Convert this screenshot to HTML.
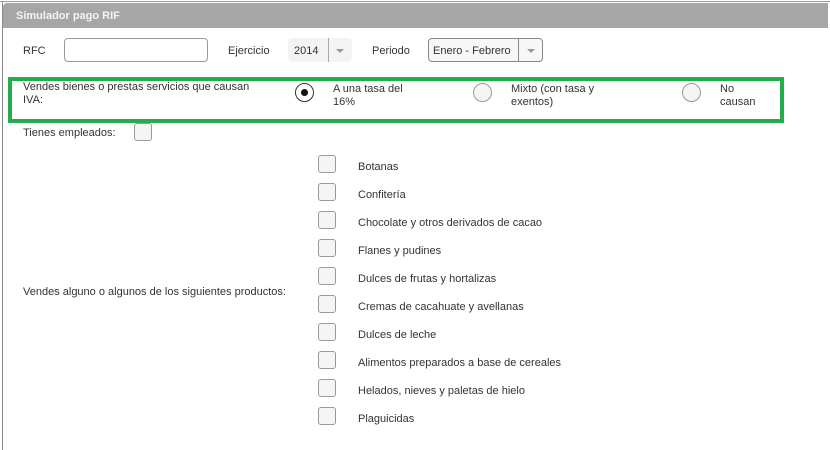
<!DOCTYPE html>
<html><head><meta charset="utf-8"><style>
*{box-sizing:border-box;margin:0;padding:0}
body{width:830px;height:450px;background:#fff;font-family:"Liberation Sans",Arial,sans-serif;font-size:11px;color:#333;position:relative;overflow:hidden}
.a{position:absolute}
.top{left:0;top:1px;width:830px;height:1px;background:#999}
.left{left:2px;top:2px;width:1px;height:448px;background:#8a8a8a}
.hdr{left:3px;top:3px;width:825px;height:25px;background:#a6a6a6;border-radius:4px 0 0 0;color:#f4f4f4;font-weight:bold;font-size:11px;padding:7px 0 0 13px}
.inp{border:1px solid #999;border-radius:4px;background:#fff}
.sel{border-radius:4px;background:#f3f3f3}
.div{width:1px;background:#aaa}
.arr{width:0;height:0;border-left:4px solid transparent;border-right:4px solid transparent;border-top:4px solid #999}
.green{left:8px;top:77px;width:776px;height:46px;border:4px solid #23ad4b}
.rad{width:19px;height:19px;border:1px solid #999;border-radius:50%;background:#f5f5f5}
.cb{width:18px;height:18px;border:1px solid #999;border-radius:3px;background:#f5f5f5}
</style></head><body>
<div class="a top"></div><div class="a left"></div>
<div class="a hdr">Simulador pago RIF</div>

<div class="a" style="left:23px;top:45px">RFC</div>
<div class="a inp" style="left:64px;top:38px;width:144px;height:24px"></div>
<div class="a" style="left:228px;top:45px">Ejercicio</div>
<div class="a sel" style="left:288px;top:38px;width:64px;height:24px"></div>
<div class="a" style="left:294px;top:45px">2014</div>
<div class="a div" style="left:328px;top:38px;height:24px"></div>
<div class="a arr" style="left:336px;top:49px"></div>
<div class="a" style="left:372px;top:45px">Periodo</div>
<div class="a inp" style="left:428px;top:38px;width:115px;height:24px;border-color:#888;background:#f7f7f7"></div>
<div class="a" style="left:433px;top:45px">Enero - Febrero</div>
<div class="a div" style="left:518px;top:38px;height:24px;background:#888"></div>
<div class="a arr" style="left:527px;top:49px"></div>

<div class="a green"></div>
<div class="a" style="left:23px;top:81px;line-height:13px">Vendes bienes o prestas servicios que causan<br>IVA:</div>
<div class="a rad" style="left:295px;top:83px;border-color:#333;background:#fff"></div>
<div class="a" style="left:301px;top:89px;width:7px;height:7px;border-radius:50%;background:#111"></div>
<div class="a" style="left:333px;top:83px;line-height:13px">A una tasa del<br>16%</div>
<div class="a rad" style="left:473px;top:83px"></div>
<div class="a" style="left:511px;top:83px;line-height:13px">Mixto (con tasa y<br>exentos)</div>
<div class="a rad" style="left:682px;top:83px"></div>
<div class="a" style="left:720px;top:83px;line-height:13px">No<br>causan</div>

<div class="a" style="left:23px;top:127px">Tienes empleados:</div>
<div class="a cb" style="left:134px;top:123px"></div>

<div class="a" style="left:23px;top:286px">Vendes alguno o algunos de los siguientes productos:</div>

<div class="a cb" style="left:318px;top:155px"></div><div class="a" style="left:358px;top:161px">Botanas</div>
<div class="a cb" style="left:318px;top:183px"></div><div class="a" style="left:358px;top:189px">Confitería</div>
<div class="a cb" style="left:318px;top:211px"></div><div class="a" style="left:358px;top:217px">Chocolate y otros derivados de cacao</div>
<div class="a cb" style="left:318px;top:239px"></div><div class="a" style="left:358px;top:245px">Flanes y pudines</div>
<div class="a cb" style="left:318px;top:267px"></div><div class="a" style="left:358px;top:273px">Dulces de frutas y hortalizas</div>
<div class="a cb" style="left:318px;top:295px"></div><div class="a" style="left:358px;top:301px">Cremas de cacahuate y avellanas</div>
<div class="a cb" style="left:318px;top:323px"></div><div class="a" style="left:358px;top:329px">Dulces de leche</div>
<div class="a cb" style="left:318px;top:351px"></div><div class="a" style="left:358px;top:357px">Alimentos preparados a base de cereales</div>
<div class="a cb" style="left:318px;top:379px"></div><div class="a" style="left:358px;top:385px">Helados, nieves y paletas de hielo</div>
<div class="a cb" style="left:318px;top:407px"></div><div class="a" style="left:358px;top:413px">Plaguicidas</div>
</body></html>
